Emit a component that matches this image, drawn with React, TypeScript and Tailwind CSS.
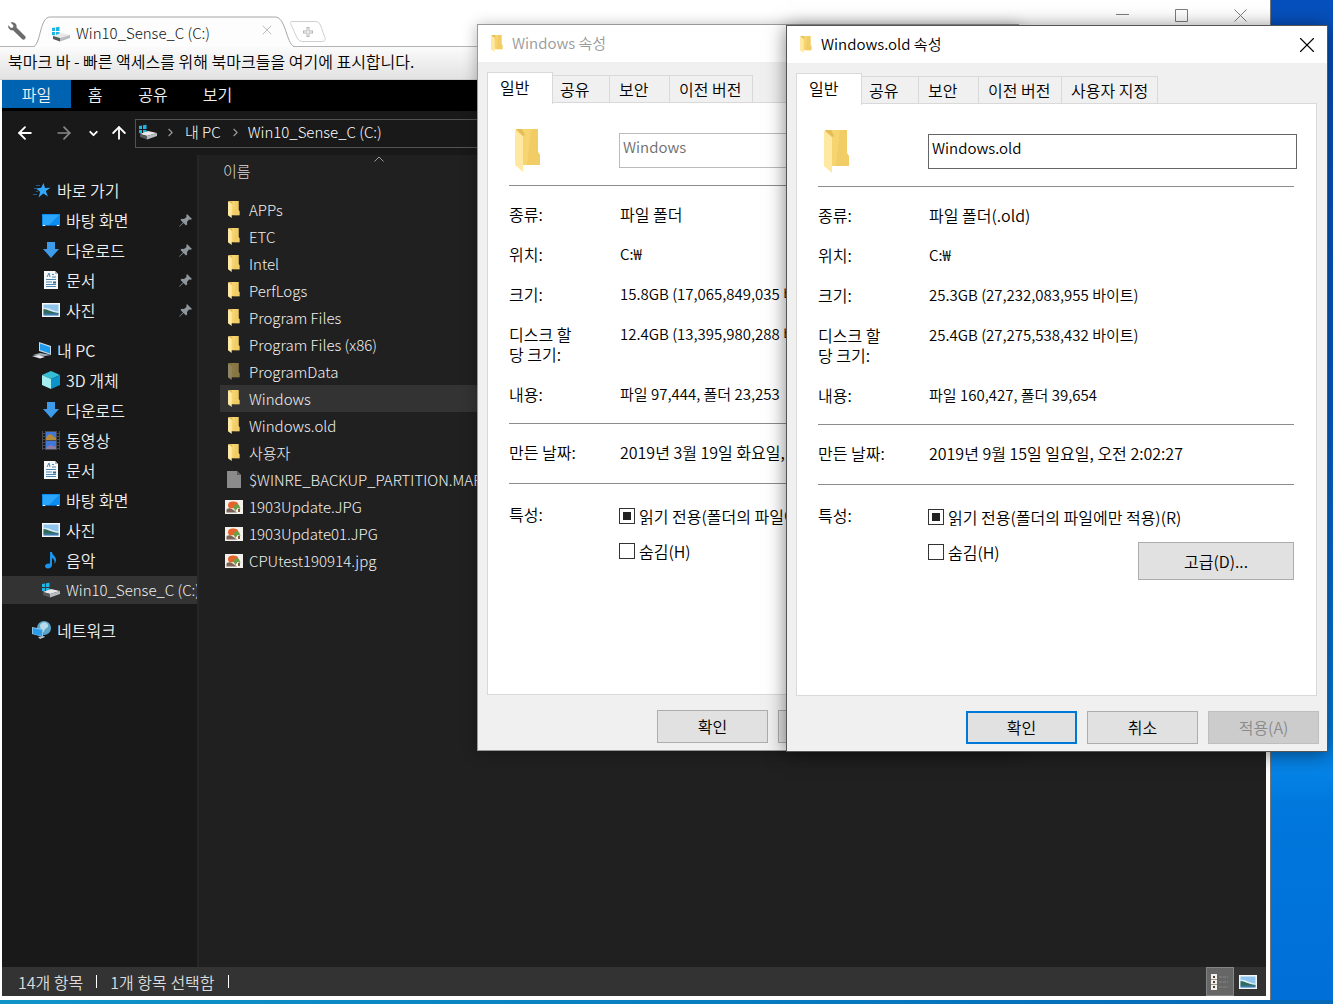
import type { ReactNode } from "react";
import { ArrowLeft, ArrowRight, ArrowUp, ChevronDown, ChevronRight, X } from "lucide-react";

const FolderIcon = ({ className = "h-[17px] w-3", dim = false }: { className?: string; dim?: boolean }) => (
  <svg viewBox="0 0 26 43" preserveAspectRatio="none" className={`shrink-0 ${className} ${dim ? "opacity-50" : ""}`}>
    <path d="M1 0h22v23l2 3v10H1z" fill="#f6d470" />
    <path d="M16 0h7v23l2 3v10H12z" fill="#eec65c" opacity="0.5" />
    <path d="M0 1l8 6v36L0 36z" fill="#ffe9a2" />
    <path d="M1 0h6l3 6-2 1z" fill="#e3bd57" />
  </svg>
);

const DriveIcon = () => (
  <svg viewBox="0 0 20 16" className="h-4 w-5 shrink-0">
    <path d="M1 2l3-.5V5H1zM5 1.300l3.500-.5V5H5zM1 6h3v3.500L1 9zM5 6h3.500v4L5 9.600z" fill="#1cb5e6" />
    <path d="M2 10l8-3 9 2-10 3z" fill="#e8e8e8" />
    <path d="M2 10l7 2v3.500L2 13z" fill="#55585c" />
    <path d="M9 12l10-3v3L9 15.500z" fill="#b9bcc0" />
  </svg>
);

const StarIcon = () => (
  <svg viewBox="0 0 18 16" className="h-4 w-[18px]">
    <path d="M10.500 1l1.500 5 5.500-.2-4.600 3.300 2 5.500-4.600-3-4.700 3.800 1.500-5.600L3 6.500l5.200-.7z" fill="#33a6f5" />
    <path d="M3 3.500h4M1 6.500h3M3 9.500h2M0 12.500h4" stroke="#1d5f92" />
  </svg>
);

const DesktopIcon = () => (
  <svg viewBox="0 0 18 14" className="h-[14px] w-[18px]">
    <path d="M0 1h18v12H0z" fill="#0b8ef0" />
    <path d="M1 2h16L7 12H1z" fill="#2ba6fb" />
    <path d="M1 12.500h2M15 12.500h2" stroke="#fff" />
    <path d="M4 12.500h10" stroke="#0a5ca8" />
  </svg>
);

const DownloadIcon = () => (
  <svg viewBox="0 0 18 16" className="h-4 w-[18px]">
    <path d="M5 0h8v7h4l-8 9-8-9h4z" fill="#3d9be9" />
  </svg>
);

const DocumentIcon = () => (
  <svg viewBox="0 0 18 18" className="size-[18px]">
    <path d="M2 0h11l3 3v15H2z" fill="#f6f8fa" />
    <path d="M13 0l3 3h-3z" fill="#aeb6bd" />
    <path d="M5 6l2-4 1 4M10 3.500h2M10 6h4M4 8.500h10M4 11h6M4 13.500h10M4 15.500h10" stroke="#4d86ae" fill="none" />
    <path d="M11 10.500h3v2h-3z" fill="#2d6b97" />
  </svg>
);

const PictureIcon = () => (
  <svg viewBox="0 0 18 14" className="h-[14px] w-[18px]">
    <path d="M0 0h18v14H0z" fill="#f5f7f9" />
    <path d="M1.500 1.500h15v11h-15z" fill="#8fc4ec" />
    <path d="M1.500 5c5-1 8 3 15 3.500v4h-15z" fill="#dcedf8" />
    <path d="M1.500 6c4 0 7 3 15 4v1h-15z" fill="#2e6b5a" />
    <path d="M1.500 10.500h15v2h-15z" fill="#3e79ad" />
  </svg>
);

const PhotoFileIcon = () => (
  <svg viewBox="0 0 18 14" className="h-[14px] w-[18px]">
    <path d="M0 0h18v14H0z" fill="#f3f1ec" />
    <path d="M1.500 12.500V9.500C3 8 5 8 7 9l5 3.500z" fill="#7d6256" />
    <path d="M3 5c0-3 3-4 6-3.500S14 3 13 6l-4 2-4 .5C4 8 3 7 3 5z" fill="#e8632c" />
    <path d="M10 4l4 1 1.500 4-3-1-2 3-2-3z" fill="#69a049" />
    <path d="M13 9h2v3h-2z" fill="#8a5a3c" />
  </svg>
);

const ComputerIcon = () => (
  <svg viewBox="0 0 20 18" className="h-[18px] w-5">
    <path d="M7 1l12 4v9L7 10z" fill="#c4dbe9" />
    <path d="M8 2.500L18 6v6.500L8 9z" fill="#1f9bee" />
    <path d="M1 14l7-2 11 2-6 1z" fill="#9fb0bd" />
    <path d="M0 15l7-1 6 2-5 1.500z" fill="#e9e6f0" />
  </svg>
);

const CubeIcon = () => (
  <svg viewBox="0 0 18 18" className="size-[18px]">
    <path d="M0 4l9-4 9 4-9 4z" fill="#35bdd4" />
    <path d="M0 4l9 4v10l-9-4z" fill="#a5eef0" />
    <path d="M18 4L9 8v10l9-4z" fill="#0b93cb" />
  </svg>
);

const VideoIcon = () => (
  <svg viewBox="0 0 18 19" className="h-[19px] w-[18px]">
    <path d="M0 0h18v19H0z" fill="#4a4a4c" />
    <path d="M2 0v19M16 0v19" stroke="#15171a" strokeWidth="2" strokeDasharray="2 1" />
    <path d="M4 1h10v8H4zM4 10h10v8H4z" fill="#3f78d8" />
    <path d="M4 7c2-4 5-5 7-2l3 2v2H4z" fill="#b58a3c" />
    <path d="M4 17l4-3 6 2v2H4z" fill="#8f7ba8" />
  </svg>
);

const MusicIcon = () => (
  <svg viewBox="0 0 18 18" className="size-[18px]">
    <path d="M8 1h2c0 3 4 4 4 8 0 2-1 3-1.500 4 .5-4-1-5-2.500-6v7c0 2-2 3.500-4 3.500S3 16.500 3 15s2-3 5-2.500z" fill="#1b94ee" />
  </svg>
);

const NetworkIcon = () => (
  <svg viewBox="0 0 20 18" className="h-[18px] w-5">
    <circle cx="12" cy="7" r="7" fill="#5aa5c8" />
    <path d="M8 4c3-4 7-3 8 0s-3 3-4 6-4-2-4-6z" fill="#b7dce9" />
    <path d="M0 6l11 2v8L0 13z" fill="#8cc4e8" />
    <path d="M1 7l9 2v6l-9-2z" fill="#2a9ceb" />
    <path d="M6 16l6-1 1 1-5 2z" fill="#b4c4ce" />
  </svg>
);

const BlankFileIcon = () => (
  <svg viewBox="0 0 14 17" className="h-[17px] w-[14px]">
    <path d="M0 0h10l4 4v13H0z" fill="#8b8b8b" />
    <path d="M10 0l4 4h-4z" fill="#5c5c5c" />
  </svg>
);

const PinIcon = () => (
  <svg viewBox="0 0 13 13" className="size-[13px]">
    <path d="M8 0l5 5-1.500.7L10 5.500 8 8l.2 2.500L7 11.500 4.500 9 .8 12.500 0 13l.5-1L4 8.500 1.500 6l1-1.200L5 5l2.500-2L7.300 1.500z" fill="#8f979d" />
  </svg>
);

const WrenchIcon = () => (
  <svg viewBox="0 0 18 18" className="size-[18px]">
    <path d="M2.500.5L5.500 3.500 5 5.500 3 6 .3 3.200C-.5 6 2 9 5 8.300L14 17c2 2 5-1 3-3L8.500 5.500C9.500 2 6-.8 2.500.5z" fill="#6c6c6c" />
  </svg>
);

const DetailsIcon = () => (
  <svg viewBox="0 0 18 16" className="h-4 w-[18px]">
    <path d="M0 0h6v16H0z" fill="#f2efe9" />
    <path d="M2 2h2v2H2zM2 7h2v2H2zM2 12h2v2H2z" fill="#4d4138" />
    <path d="M0 5.500h6M0 10.500h6" stroke="#9b958c" />
    <path d="M8 3h9M8 8h9M8 13h9" stroke="#858585" strokeDasharray="3 1" />
  </svg>
);

interface NavItem {
  label: string;
  icon: ReactNode;
  pinned?: boolean;
  selected?: boolean;
}

interface NavGroup extends NavItem {
  items: NavItem[];
}

const navGroups: NavGroup[] = [
  {
    label: "바로 가기",
    icon: <StarIcon />,
    items: [
      { label: "바탕 화면", icon: <DesktopIcon />, pinned: true },
      { label: "다운로드", icon: <DownloadIcon />, pinned: true },
      { label: "문서", icon: <DocumentIcon />, pinned: true },
      { label: "사진", icon: <PictureIcon />, pinned: true },
    ],
  },
  {
    label: "내 PC",
    icon: <ComputerIcon />,
    items: [
      { label: "3D 개체", icon: <CubeIcon /> },
      { label: "다운로드", icon: <DownloadIcon /> },
      { label: "동영상", icon: <VideoIcon /> },
      { label: "문서", icon: <DocumentIcon /> },
      { label: "바탕 화면", icon: <DesktopIcon /> },
      { label: "사진", icon: <PictureIcon /> },
      { label: "음악", icon: <MusicIcon /> },
      { label: "Win10_Sense_C (C:)", icon: <DriveIcon />, selected: true },
    ],
  },
  { label: "네트워크", icon: <NetworkIcon />, items: [] },
];

const files = [
  { name: "APPs", type: "folder" },
  { name: "ETC", type: "folder" },
  { name: "Intel", type: "folder" },
  { name: "PerfLogs", type: "folder" },
  { name: "Program Files", type: "folder" },
  { name: "Program Files (x86)", type: "folder" },
  { name: "ProgramData", type: "hidden" },
  { name: "Windows", type: "folder" },
  { name: "Windows.old", type: "folder" },
  { name: "사용자", type: "folder" },
  { name: "$WINRE_BACKUP_PARTITION.MARKER", type: "file" },
  { name: "1903Update.JPG", type: "image" },
  { name: "1903Update01.JPG", type: "image" },
  { name: "CPUtest190914.jpg", type: "image" },
];

const FileIcon = ({ type }: { type: string }) => {
  if (type === "image") return <PhotoFileIcon />;
  if (type === "file") return <BlankFileIcon />;
  return <FolderIcon dim={type === "hidden"} />;
};

const TabStrip = () => (
  <header className="flex h-[47px] items-end border-b border-[#b4b4b4] bg-white">
    <button aria-label="도구" className="mb-1.5 ml-2">
      <WrenchIcon />
    </button>
    <div className="relative -mb-px ml-2 flex h-[31px] w-[260px] items-center pt-1 pl-[17px]">
      <svg viewBox="0 0 260 31" className="absolute inset-0 h-full w-full">
        <path d="M0 31C6 26 6 1 16 1h225c11 0 12 24 19 30z" fill="#fdfdfd" />
        <path d="M0 30.500C7 26 6 1 16 1h225c11 0 11 26 19 29.500" fill="none" stroke="#a6a6a6" />
      </svg>
      <div className="relative flex flex-1 items-center gap-[5px]">
        <DriveIcon />
        <span className="text-[15px] font-light text-[#111]">Win10_Sense_C (C:)</span>
        <button aria-label="탭 닫기" className="mr-[19px] ml-auto self-start text-[#bdbdbd]">
          <X size={16} strokeWidth={1.5} />
        </button>
      </div>
    </div>
    <button aria-label="새 탭" className="mb-1 -ml-1">
      <svg viewBox="0 0 36 21" className="h-[21px] w-9" fill="none" stroke="#cfcfcf">
        <path d="M2 .5h24c5 0 6 10 9 16 .5 2 0 4-3 4H12c-5 0-7-9-11-17C.5 2 0 .5 2 .5z" />
        <path d="M18 6v10M13 11h10" stroke="#b5b5b5" strokeWidth="3" />
        <path d="M18 7v8M14 11h8" stroke="#fff" />
      </svg>
    </button>
    <div className="mr-[23px] ml-auto flex gap-[46px] self-start pt-[9px]">
      <button aria-label="최소화">
        <svg viewBox="0 0 13 13" className="size-[13px]" stroke="#7d7d7d"><path d="M0 5.500h13" /></svg>
      </button>
      <button aria-label="최대화">
        <svg viewBox="0 0 13 13" className="size-[13px]" fill="none" stroke="#7d7d7d"><path d="M.5.5h12v12H.5z" /></svg>
      </button>
      <button aria-label="닫기">
        <svg viewBox="0 0 13 13" className="size-[13px]" stroke="#7d7d7d"><path d="M.5.5l12 12M12.500.5l-12 12" /></svg>
      </button>
    </div>
  </header>
);

const AddressBar = () => (
  <div className="flex h-11 items-center bg-[#191919] text-white">
    <button aria-label="뒤로" className="ml-[13px]"><ArrowLeft size={20} strokeWidth={2.2} /></button>
    <button aria-label="앞으로" className="ml-[19px] text-[#8a8a8a]"><ArrowRight size={20} /></button>
    <button aria-label="최근 위치" className="ml-[13px]"><ChevronDown size={13} strokeWidth={3.5} /></button>
    <button aria-label="위로" className="ml-[9px]"><ArrowUp size={20} strokeWidth={2.2} /></button>
    <nav className="ml-1.5 flex h-[29px] flex-1 items-center border border-[#535353] pb-0.5 pl-0.5 text-[15px] font-light">
      <DriveIcon />
      <ChevronRight size={13} className="mx-[6px] text-[#9a9a9a]" />
      <a href="#pc" className="mx-0.5">내 PC</a>
      <ChevronRight size={13} className="mx-[6px] text-[#9a9a9a]" />
      <a href="#drive">Win10_Sense_C (C:)</a>
    </nav>
  </div>
);

const NavRow = ({ item, child = false }: { item: NavItem; child?: boolean }) => (
  <a
    href="#nav"
    className={`my-px flex h-7 items-center overflow-hidden whitespace-nowrap ${child ? "pl-[39px]" : "pl-[30px]"} ${item.selected ? "bg-[#333] text-[15px] font-light" : ""}`}
  >
    <span className="mr-[5px] flex w-5 shrink-0 justify-center">{item.icon}</span>
    <span>{item.label}</span>
    {item.pinned && <span className="mr-[5px] ml-auto"><PinIcon /></span>}
  </a>
);

const Explorer = () => (
  <main className="mr-[62px] flex min-h-0 flex-1 flex-col border-r border-[#777] bg-white">
    <TabStrip />
    <div className="h-[33px] border-b border-[#cfcfcf] bg-linear-to-b from-[#fbfbfb] to-[#e2e2e2] pl-2 leading-7">
      북마크 바 - 빠른 액세스를 위해 북마크들을 여기에 표시합니다.
    </div>
    <div className="mr-1 mb-1 ml-0.5 flex min-h-0 flex-1 flex-col bg-[#202020] text-[#f0f0f0]">
      <div className="flex h-[31px] items-start bg-black leading-7">
        <button className="w-[69px] bg-[#0063b1]">파일</button>
        <button className="w-12">홈</button>
        <button className="w-[68px]">공유</button>
        <button className="w-[61px]">보기</button>
      </div>
      <AddressBar />
      <div className="flex min-h-0 flex-1">
        <aside className="w-[197px] shrink-0 border-r-2 border-[#262626] bg-[#191919] pt-5">
          {navGroups.map((group) => (
            <div key={group.label} className="mb-[10px] flex flex-col">
              <NavRow item={group} />
              {group.items.map((item) => (
                <NavRow key={item.label} item={item} child />
              ))}
            </div>
          ))}
        </aside>
        <table className="ml-[21px] h-fit flex-1 border-collapse text-left text-[15px] font-light">
          <thead>
            <tr>
              <th className="block h-10 w-[314px] pl-[3px] font-light text-[#dcdcdc]">
                <svg viewBox="0 0 10 6" className="mx-auto mt-px h-1.5 w-[10px]" fill="none" stroke="#9a9a9a">
                  <path d="M.5 5.500L5 1l4.500 4.500" />
                </svg>
                <span className="block leading-[18px]">이름</span>
              </th>
            </tr>
          </thead>
          <tbody>
            {files.map((file) => (
              <tr key={file.name} className={file.name === "Windows" ? "bg-[#333]" : ""}>
                <td className="h-[27px] p-0 leading-[26px]">
                  <div className="flex items-center">
                    <span className="mr-[6px] ml-[5px] flex w-[18px] justify-center">
                      <FileIcon type={file.type} />
                    </span>
                    {file.name}
                  </div>
                </td>
              </tr>
            ))}
          </tbody>
        </table>
      </div>
      <footer className="flex h-[29px] items-center bg-[#333] pl-4 text-[#dcdcdc]">
        <span>14개 항목</span>
        <span className="mx-[13px] h-[13px] w-px bg-white" />
        <span>1개 항목 선택함</span>
        <span className="mx-[13px] h-[13px] w-px bg-white" />
        <button aria-label="자세히" className="ml-auto flex h-full w-7 items-center justify-center border border-[#858585] bg-[#666]">
          <DetailsIcon />
        </button>
        <button aria-label="큰 아이콘" className="mr-[9px] ml-[5px]"><PictureIcon /></button>
      </footer>
    </div>
  </main>
);

interface DialogProps {
  name: string;
  active?: boolean;
  className: string;
  kind: string;
  size: string;
  diskSize: string;
  contents: string;
  created: string;
  customTab?: boolean;
}

const Row = ({ label, children }: { label: ReactNode; children?: ReactNode }) => (
  <div className="flex leading-5">
    <dt className="w-[111px] shrink-0">{label}</dt>
    <dd className="whitespace-nowrap">{children}</dd>
  </div>
);

const tabStyle = "h-7 border border-l-0 border-[#d9d9d9] pl-[9px] text-left leading-[26px]";
const buttonStyle = "h-[33px] w-[111px] bg-[#e1e1e1] pb-0.5";
const numberStyle = "block text-[15px]";

const PropertiesDialog = ({ name, active = false, className, kind, size, diskSize, contents, created, customTab }: DialogProps) => (
  <section
    role="dialog"
    aria-label={`${name} 속성`}
    className={`absolute flex h-[727px] w-[542px] flex-col border bg-[#f0f0f0] text-black ${active ? "border-[#555] shadow-[0_2px_18px_rgba(0,0,0,0.5)]" : "border-[#999] shadow-[0_2px_14px_rgba(0,0,0,0.3)]"} ${className}`}
  >
    <div className={`flex h-[37px] items-center bg-white pr-[7px] pl-[13px] text-[15px] ${active ? "" : "text-[#999]"}`}>
      <FolderIcon className="mr-[9px] h-[17px] w-3" />
      <h2>{name} 속성</h2>
      {active && (
        <button aria-label="닫기" className="ml-auto"><X size={26} strokeWidth={1} /></button>
      )}
    </div>
    <div className="mt-[10px] ml-[9px] flex items-end" role="tablist">
      <button role="tab" className="relative z-10 -mr-0.5 -mb-px h-8 w-[66px] border border-b-0 border-[#d9d9d9] bg-white pb-1 pl-3 text-left">
        일반
      </button>
      <button role="tab" className={`w-[59px] ${tabStyle}`}>공유</button>
      <button role="tab" className={`w-[60px] ${tabStyle}`}>보안</button>
      <button role="tab" className={`w-[83px] ${tabStyle}`}>이전 버전</button>
      {customTab && <button role="tab" className={`w-24 ${tabStyle}`}>사용자 지정</button>}
    </div>
    <div className="-mt-px mr-[10px] ml-[9px] flex-1 border border-[#d9d9d9] bg-white pt-[26px] pr-[22px] pl-[21px]">
      <div className="flex items-center">
        <FolderIcon className="ml-1.5 h-[43px] w-[26px]" />
        <input
          aria-label="폴더 이름"
          defaultValue={name}
          className={`-mr-[3px] ml-[78px] h-[35px] min-w-0 flex-1 border pb-2 pl-[3px] text-[15px] ${active ? "border-[#666]" : "border-[#bbb] text-[#6d6d6d]"}`}
        />
      </div>
      <dl className="mt-[13px] flex flex-col gap-5 border-y border-[#8c8c8c] pt-[18px] pb-[19px]">
        <Row label="종류:">{kind}</Row>
        <Row label="위치:"><span className={numberStyle}>C:₩</span></Row>
        <Row label="크기:"><span className={numberStyle}>{size}</span></Row>
        <Row label={<>디스크 할<br />당 크기:</>}><span className={numberStyle}>{diskSize}</span></Row>
        <Row label="내용:"><span className={numberStyle}>{contents}</span></Row>
      </dl>
      <dl className="border-b border-[#8c8c8c] pt-[18px] pb-[21px]">
        <Row label="만든 날짜:">{created}</Row>
      </dl>
      <div className="flex pt-5 leading-5">
        <span className="w-[110px] shrink-0">특성:</span>
        <div className="flex flex-1 flex-col gap-[15px] pt-0.5 whitespace-nowrap">
          <label className="flex items-center gap-1">
            <input type="checkbox" defaultChecked className="size-4 appearance-none border border-[#333] bg-clip-content p-[3px] checked:bg-[#222]" />
            읽기 전용(폴더의 파일에만 적용)(R)
          </label>
          <div className="flex items-start justify-between">
            <label className="flex items-center gap-1">
              <input type="checkbox" className="size-4 appearance-none border border-[#333]" />
              숨김(H)
            </label>
            <button className="h-[38px] w-[156px] border border-[#adadad] bg-[#e1e1e1]">고급(D)...</button>
          </div>
        </div>
      </div>
    </div>
    <div className="flex justify-end gap-[10px] pt-[15px] pr-2 pb-[7px]">
      <button className={`${buttonStyle} ${active ? "border-2 border-[#0078d7]" : "border border-[#adadad]"}`}>확인</button>
      <button className={`${buttonStyle} border border-[#adadad]`}>취소</button>
      <button disabled className="h-[33px] w-[111px] border border-[#bfbfbf] bg-[#ccc] pb-0.5 text-[#8a8a8a]">적용(A)</button>
    </div>
  </section>
);

export default function App() {
  return (
    <div className="relative flex h-screen flex-col overflow-hidden bg-[linear-gradient(to_bottom,#0650bd_0%,#0560d0_38%,#0583e6_77%,#0078dc_80%,#006fd8_100%)] font-['Noto_Sans_CJK_KR','Noto_Sans',sans-serif] text-[16px] font-[350]">
      <Explorer />
      <div className="h-1 shrink-0 bg-linear-to-r from-[#1094c8] to-[#0668b8]" />
      <PropertiesDialog
        name="Windows"
        className="top-6 left-[477px]"
        kind="파일 폴더"
        size="15.8GB (17,065,849,035 바이트)"
        diskSize="12.4GB (13,395,980,288 바이트)"
        contents="파일 97,444, 폴더 23,253"
        created="2019년 3월 19일 화요일, 오전 1:52:43"
      />
      <PropertiesDialog
        name="Windows.old"
        active
        className="top-[25px] left-[786px]"
        kind="파일 폴더(.old)"
        size="25.3GB (27,232,083,955 바이트)"
        diskSize="25.4GB (27,275,538,432 바이트)"
        contents="파일 160,427, 폴더 39,654"
        created="2019년 9월 15일 일요일, 오전 2:02:27"
        customTab
      />
    </div>
  );
}
